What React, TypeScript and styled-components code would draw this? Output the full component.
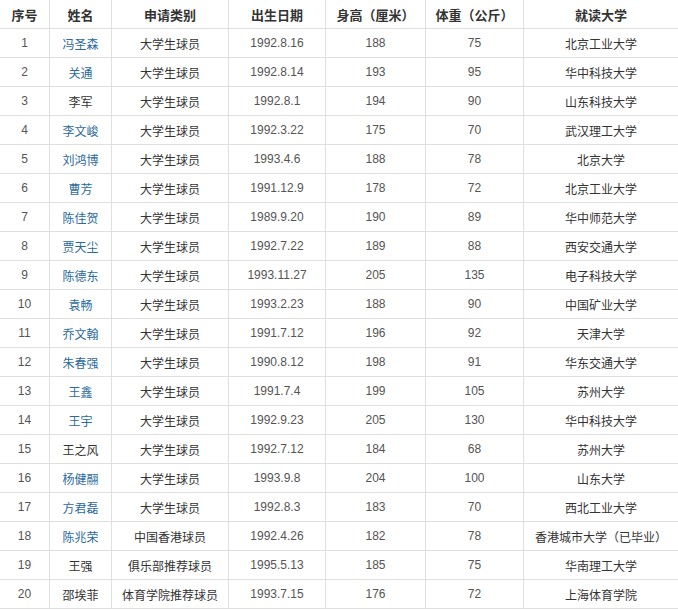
import React from "react";
import styled, { createGlobalStyle } from "styled-components";

// Глобальные стили
const GlobalStyle = createGlobalStyle`
  html, body {
    margin: 0;
    padding: 0;
    background: #ffffff;
  }
  body {
    font-family: "Liberation Sans", Arial, "Noto Sans CJK SC", sans-serif;
    color: #333;
  }
`;

const Table = styled.table`
  width: 678px;
  table-layout: fixed;
  border-collapse: separate;
  border-spacing: 0;
`;

const HeadRow = styled.tr`
  height: 29px;
`;

const Row = styled.tr`
  height: 29px;
`;

const HeadCell = styled.th<{ $last?: boolean }>`
  box-sizing: border-box;
  padding: 0;
  height: 29px;
  border-bottom: 1px solid #e0e0e0;
  border-right: ${({ $last }) => ($last ? "none" : "1px solid #e0e0e0")};
  font-size: 13px;
  font-weight: bold;
  color: #333;
  text-align: center;
  vertical-align: middle;
  white-space: nowrap;
`;

const Cell = styled.td<{ $last?: boolean; $muted?: boolean }>`
  box-sizing: border-box;
  padding: 0;
  height: 29px;
  border-bottom: 1px solid #e0e0e0;
  border-right: ${({ $last }) => ($last ? "none" : "1px solid #e0e0e0")};
  font-size: 12px;
  color: ${({ $muted }) => ($muted ? "#555" : "#333")};
  text-align: center;
  vertical-align: middle;
  white-space: nowrap;
`;

const NameLink = styled.a`
  color: #2a6a9c;
  text-decoration: none;
`;

interface Player {
  name: string;
  link: boolean;
  kind: string;
  birth: string;
  height: number;
  weight: number;
  school: string;
}

const players: Player[] = [
  { name: "冯圣森", link: true, kind: "大学生球员", birth: "1992.8.16", height: 188, weight: 75, school: "北京工业大学" },
  { name: "关通", link: true, kind: "大学生球员", birth: "1992.8.14", height: 193, weight: 95, school: "华中科技大学" },
  { name: "李军", link: false, kind: "大学生球员", birth: "1992.8.1", height: 194, weight: 90, school: "山东科技大学" },
  { name: "李文峻", link: true, kind: "大学生球员", birth: "1992.3.22", height: 175, weight: 70, school: "武汉理工大学" },
  { name: "刘鸿博", link: true, kind: "大学生球员", birth: "1993.4.6", height: 188, weight: 78, school: "北京大学" },
  { name: "曹芳", link: true, kind: "大学生球员", birth: "1991.12.9", height: 178, weight: 72, school: "北京工业大学" },
  { name: "陈佳贺", link: true, kind: "大学生球员", birth: "1989.9.20", height: 190, weight: 89, school: "华中师范大学" },
  { name: "贾天尘", link: true, kind: "大学生球员", birth: "1992.7.22", height: 189, weight: 88, school: "西安交通大学" },
  { name: "陈德东", link: true, kind: "大学生球员", birth: "1993.11.27", height: 205, weight: 135, school: "电子科技大学" },
  { name: "袁畅", link: true, kind: "大学生球员", birth: "1993.2.23", height: 188, weight: 90, school: "中国矿业大学" },
  { name: "乔文翰", link: true, kind: "大学生球员", birth: "1991.7.12", height: 196, weight: 92, school: "天津大学" },
  { name: "朱春强", link: true, kind: "大学生球员", birth: "1990.8.12", height: 198, weight: 91, school: "华东交通大学" },
  { name: "王鑫", link: true, kind: "大学生球员", birth: "1991.7.4", height: 199, weight: 105, school: "苏州大学" },
  { name: "王宇", link: true, kind: "大学生球员", birth: "1992.9.23", height: 205, weight: 130, school: "华中科技大学" },
  { name: "王之风", link: false, kind: "大学生球员", birth: "1992.7.12", height: 184, weight: 68, school: "苏州大学" },
  { name: "杨健翮", link: true, kind: "大学生球员", birth: "1993.9.8", height: 204, weight: 100, school: "山东大学" },
  { name: "方君磊", link: true, kind: "大学生球员", birth: "1992.8.3", height: 183, weight: 70, school: "西北工业大学" },
  { name: "陈兆荣", link: true, kind: "中国香港球员", birth: "1992.4.26", height: 182, weight: 78, school: "香港城市大学（已毕业）" },
  { name: "王强", link: false, kind: "俱乐部推荐球员", birth: "1995.5.13", height: 185, weight: 75, school: "华南理工大学" },
  { name: "邵埃菲", link: false, kind: "体育学院推荐球员", birth: "1993.7.15", height: 176, weight: 72, school: "上海体育学院" },
];

const columns = [
  { title: "序号", width: 50 },
  { title: "姓名", width: 62 },
  { title: "申请类别", width: 117 },
  { title: "出生日期", width: 97 },
  { title: "身高（厘米）", width: 100 },
  { title: "体重（公斤）", width: 98 },
  { title: "就读大学", width: 154 },
];

function App() {
  return (
    <>
      <GlobalStyle />
      <Table>
        <colgroup>
          {columns.map((c) => (
            <col key={c.title} style={{ width: c.width }} />
          ))}
        </colgroup>
        <thead>
          <HeadRow>
            {columns.map((c, i) => (
              <HeadCell key={c.title} $last={i === columns.length - 1}>
                {c.title}
              </HeadCell>
            ))}
          </HeadRow>
        </thead>
        <tbody>
          {players.map((p, i) => (
            <Row key={p.name}>
              <Cell $muted>{i + 1}</Cell>
              <Cell>{p.link ? <NameLink href="#">{p.name}</NameLink> : p.name}</Cell>
              <Cell>{p.kind}</Cell>
              <Cell $muted>{p.birth}</Cell>
              <Cell $muted>{p.height}</Cell>
              <Cell $muted>{p.weight}</Cell>
              <Cell $last>{p.school}</Cell>
            </Row>
          ))}
        </tbody>
      </Table>
    </>
  );
}

export default App;
